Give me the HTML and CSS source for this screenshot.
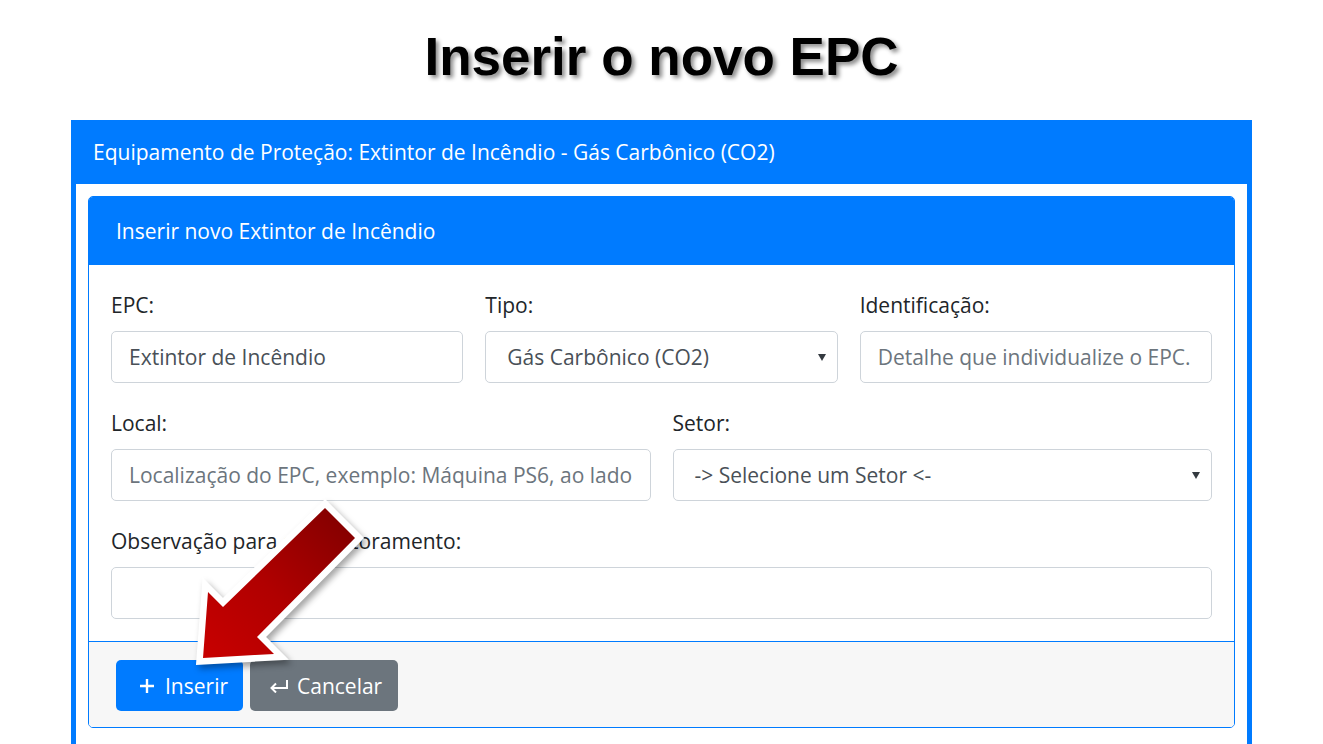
FILE: index.html
```html
<!DOCTYPE html>
<html lang="pt-BR">
<head>
    <meta charset="UTF-8">
    <meta name="viewport" content="width=device-width, initial-scale=1.0">
    <title>Inserir o novo EPC</title>
    <link rel="stylesheet" href="styles.css">
</head>
<body>
    <div class="page">
        <h1 class="page-title">Inserir o novo EPC</h1>

        <div class="card-outer">
            <div class="card-outer-header">Equipamento de Proteção: Extintor de Incêndio - Gás Carbônico (CO2)</div>
            <div class="card-outer-body">
                <div class="card">
                    <div class="card-header">Inserir novo Extintor de Incêndio</div>
                    <div class="card-body">
                        <div class="form-row cols-3">
                            <div class="form-group">
                                <label>EPC:</label>
                                <div class="form-control">Extintor de Incêndio</div>
                            </div>
                            <div class="form-group">
                                <label>Tipo:</label>
                                <div class="form-control select">
                                    <span>Gás Carbônico (CO2)</span>
                                    <span class="caret"></span>
                                </div>
                            </div>
                            <div class="form-group">
                                <label>Identificação:</label>
                                <div class="form-control placeholder">Detalhe que individualize o EPC.</div>
                            </div>
                        </div>
                        <div class="form-row cols-2">
                            <div class="form-group">
                                <label>Local:</label>
                                <div class="form-control placeholder">Localização do EPC, exemplo: Máquina PS6, ao lado</div>
                            </div>
                            <div class="form-group">
                                <label>Setor:</label>
                                <div class="form-control select">
                                    <span>-&gt; Selecione um Setor &lt;-</span>
                                    <span class="caret"></span>
                                </div>
                            </div>
                        </div>
                        <div class="form-row">
                            <div class="form-group">
                                <label>Observação para o monitoramento:</label>
                                <div class="form-control"></div>
                            </div>
                        </div>
                    </div>
                    <div class="card-footer">
                        <button class="btn btn-primary">
                            <svg class="btn-icon" width="16" height="16" viewBox="0 0 16 16">
                                <path d="M8 1v14M1 8h14" stroke="#fff" stroke-width="2.4" fill="none"/>
                            </svg>
                            Inserir
                        </button>
                        <button class="btn btn-secondary">
                            <svg class="btn-icon" width="20" height="14" viewBox="0 0 20 14">
                                <path d="M18 1v8H3" stroke="#fff" stroke-width="2" fill="none"/>
                                <path d="M7 4.5L2.5 9 7 13.5" stroke="#fff" stroke-width="2" fill="none"/>
                            </svg>
                            Cancelar
                        </button>
                    </div>
                </div>
            </div>
        </div>

        <!-- seta de destaque por cima do formulário -->
        <svg class="pointer-arrow" width="1323" height="744" viewBox="0 0 1323 744">
            <defs>
                <linearGradient id="arrowFill" x1="355" y1="508" x2="203" y2="658" gradientUnits="userSpaceOnUse">
                    <stop offset="0" stop-color="#7e0000"/>
                    <stop offset="0.55" stop-color="#b00000"/>
                    <stop offset="1" stop-color="#c80000"/>
                </linearGradient>
            </defs>
            <polygon points="203,658 208,592 223,607 325,508 355,538 257,637 274,654"
                     fill="url(#arrowFill)" stroke="#fff" stroke-width="13" stroke-linejoin="miter" paint-order="stroke"/>
        </svg>
    </div>
</body>
</html>
```

FILE: styles.css
```css
* {
    margin: 0;
    padding: 0;
    box-sizing: border-box;
}

body {
    font-family: "Open Sans", "Noto Sans", sans-serif;
    color: #212529;
    background: #fff;
    overflow: hidden;
}

.page {
    position: relative;
    width: 1323px;
    height: 744px;
}

.page-title {
    font-family: "Liberation Sans", Arial, sans-serif;
    font-weight: bold;
    font-size: 53px;
    line-height: 60px;
    text-align: center;
    padding: 27px 0 33px;
    color: #000;
    text-shadow: 3px 3px 4px rgba(0, 0, 0, 0.45);
}

.card-outer {
    width: 1181px;
    margin: 0 auto;
    background: #fff;
    border: 5px solid #007bff;
    border-top: 0;
}

.card-outer-header {
    background: #007bff;
    color: #fff;
    height: 64px;
    line-height: 64px;
    font-size: 21px;
    margin: 0 -5px;
    padding-left: 22px;
}

.card-outer-body {
    padding: 12px 12px 40px;
}

.card {
    border: 1px solid #007bff;
    border-radius: 5px;
    overflow: hidden;
}

.card-header {
    background: #007bff;
    color: #fff;
    height: 68px;
    line-height: 68px;
    padding-left: 27px;
    font-size: 21px;
}

.card-body {
    padding: 24px 22px 22px;
}

.form-row {
    display: grid;
    grid-template-columns: 1fr;
    gap: 22px;
    margin-bottom: 24px;
}

.form-row:last-child {
    margin-bottom: 0;
}

.form-row.cols-3 {
    grid-template-columns: repeat(3, 1fr);
}

.form-row.cols-2 {
    grid-template-columns: repeat(2, 1fr);
}

.form-group label {
    display: block;
    font-size: 21px;
    line-height: 32px;
    margin-bottom: 10px;
    color: #212529;
}

.form-control {
    height: 52px;
    border: 1px solid #ced4da;
    border-radius: 5px;
    padding: 0 17px;
    font-size: 21px;
    line-height: 50px;
    color: #495057;
    white-space: nowrap;
    overflow: hidden;
}

.form-control.placeholder {
    color: #6c757d;
}

.form-control.select {
    display: flex;
    justify-content: space-between;
    align-items: center;
    padding-right: 11px;
    padding-left: 21px;
}

.caret {
    flex-shrink: 0;
    width: 0;
    height: 0;
    border-left: 4px solid transparent;
    border-right: 4px solid transparent;
    border-top: 7px solid #343a40;
}

.card-footer {
    background: #f7f7f7;
    border-top: 1px solid #007bff;
    padding: 18px 27px 16px;
    display: flex;
    gap: 7px;
}

.btn {
    display: flex;
    align-items: center;
    gap: 10px;
    font-family: inherit;
    font-size: 21px;
    height: 51px;
    border: 0;
    border-radius: 5px;
    color: #fff;
    padding: 0 0 0 23px;
}

.btn-icon {
    flex-shrink: 0;
}

.btn-primary {
    background: #007bff;
    width: 127px;
}

.btn-secondary {
    background: #6c757d;
    width: 148px;
    padding-left: 19px;
    gap: 8px;
}

.pointer-arrow {
    position: absolute;
    left: 0;
    top: 0;
    pointer-events: none;
    filter: drop-shadow(3px 4px 3px rgba(0, 0, 0, 0.35));
}
```
